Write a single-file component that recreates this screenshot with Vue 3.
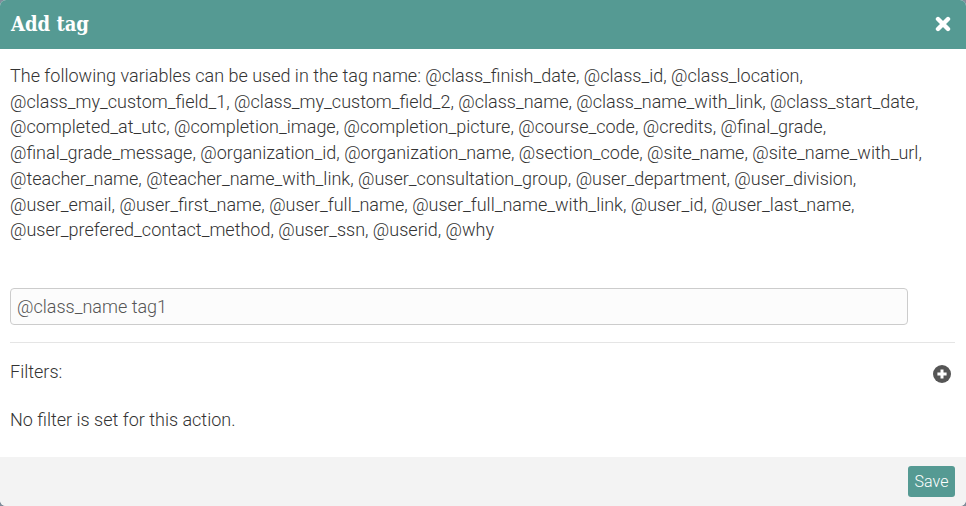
<script setup>
const message = 'The following variables can be used in the tag name: @class_finish_date, @class_id, @class_location, @class_my_custom_field_1, @class_my_custom_field_2, @class_name, @class_name_with_link, @class_start_date, @completed_at_utc, @completion_image, @completion_picture, @course_code, @credits, @final_grade, @final_grade_message, @organization_id, @organization_name, @section_code, @site_name, @site_name_with_url, @teacher_name, @teacher_name_with_link, @user_consultation_group, @user_department, @user_division, @user_email, @user_first_name, @user_full_name, @user_full_name_with_link, @user_id, @user_last_name, @user_prefered_contact_method, @user_ssn, @userid, @why'
</script>

<template>
  <div class="modal">
    <header class="modal-header">
      <h3>Add tag</h3>
      <button class="close-btn" aria-label="Close">
        <svg xmlns="http://www.w3.org/2000/svg" width="16" height="16" viewBox="0 0 16 16">
          <path d="M3 3 L13 13 M13 3 L3 13" fill="none" stroke="#fff" stroke-width="4.4" stroke-linecap="round"></path>
        </svg>
      </button>
    </header>
    <div class="modal-body">
      <p class="variables">{{ message }}</p>
      <input class="tag-input" type="text" value="@class_name tag1">
      <div class="filters">
        <div class="filters-head">
          <span>Filters:</span>
          <svg xmlns="http://www.w3.org/2000/svg" width="18" height="18" viewBox="0 0 18 18">
            <circle cx="9" cy="9" r="9" fill="#555"></circle>
            <path d="M9 4.4 V13.6 M4.4 9 H13.6" stroke="#fff" stroke-width="3" fill="none"></path>
          </svg>
        </div>
        <p class="no-filter">No filter is set for this action.</p>
      </div>
    </div>
    <footer class="modal-footer">
      <button class="save-btn">Save</button>
    </footer>
  </div>
</template>

<style>
html, body {
  margin: 0;
  background: #7f8c9a;
}
</style>

<style scoped>
.modal {
  width: 966px;
  height: 506px;
  display: flex;
  flex-direction: column;
  background: #fff;
  border-radius: 6px;
  overflow: hidden;
  font-family: Roboto, sans-serif;
  font-weight: 300;
  font-size: 18px;
  line-height: 25.7px;
  color: #333;
}

.modal-header {
  height: 49px;
  flex: none;
  display: flex;
  align-items: center;
  justify-content: space-between;
  padding: 0 15px 2px 11px;
  box-sizing: border-box;
  background: #559a93;
}

.modal-header h3 {
  margin: 3px 0 0;
  font-family: "DejaVu Serif Condensed", "DejaVu Serif", serif;
  font-stretch: condensed;
  font-size: 20px;
  font-weight: 700;
  color: #fff;
}

.close-btn {
  display: flex;
  padding: 0;
  background: transparent;
  border: none;
}

.modal-body {
  flex: 1;
  padding: 14px 11px 0 10px;
}

.variables {
  margin: 0;
}

.tag-input {
  display: block;
  box-sizing: border-box;
  width: 898px;
  height: 37px;
  margin-top: 45px;
  padding: 0 6px;
  background: #fcfcfc;
  border: 1px solid #ccc;
  border-radius: 4px;
  font: inherit;
  color: #555;
}

.filters {
  margin-top: 17px;
  padding-top: 16px;
  border-top: 1px solid #e5e5e5;
}

.filters-head {
  display: flex;
  justify-content: space-between;
  align-items: flex-start;
  padding-right: 4px;
}

.filters-head svg {
  margin-top: 6px;
}

.no-filter {
  margin: 22px 0 0;
}

.modal-footer {
  height: 49px;
  flex: none;
  display: flex;
  align-items: center;
  justify-content: flex-end;
  padding: 0 11px;
  background: #f3f3f3;
}

.save-btn {
  width: 47px;
  height: 31px;
  padding: 0;
  background: #559a93;
  border: none;
  border-radius: 3px;
  font: inherit;
  font-size: 16px;
  color: #fff;
}
</style>
